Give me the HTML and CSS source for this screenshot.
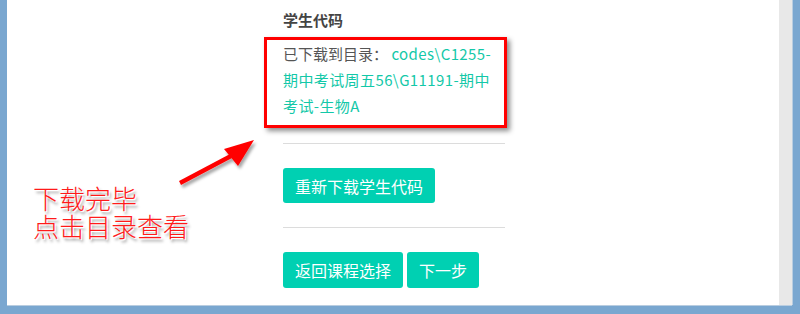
FILE: index.html
```html
<!DOCTYPE html>
<html lang="zh-CN">

<head>
    <meta charset="UTF-8">
    <title>下载学生代码</title>
    <link rel="stylesheet" href="styles.css">
</head>

<body>
    <div class="window">
        <div class="main">
            <div class="section">
                <h3 class="section-title">学生代码</h3>
                <p class="path-text">已下载到目录： <span class="path">codes\C1255-<br>期中考试周五56\G11191-期中<br>考试-生物A</span></p>
                <hr class="divider">
                <button class="btn">重新下载学生代码</button>
                <hr class="divider">
                <div class="btn-row">
                    <button class="btn">返回课程选择</button>
                    <button class="btn">下一步</button>
                </div>
            </div>
        </div>
        <div class="scrollbar"></div>

        <div class="mark-box"></div>
        <svg class="mark-arrow" width="100" height="60" viewBox="0 0 100 60">
            <defs>
                <filter id="shade" x="-20%" y="-20%" width="140%" height="140%">
                    <feDropShadow dx="2" dy="3" stdDeviation="1.5" flood-color="#000" flood-opacity="0.35"/>
                </filter>
            </defs>
            <g filter="url(#shade)" fill="#ff0000">
                <path d="M7 44 L58 17 L60 21 L9 48 Z"/>
                <path d="M82 3 L52 12 L66 29 Z"/>
            </g>
        </svg>
        <div class="mark-note">
            <div class="mark-line">下载完毕</div>
            <div class="mark-line">点击目录查看</div>
        </div>
    </div>
</body>

</html>
```

FILE: styles.css
```css
body {
    margin: 0;
    background-color: #7aa7d0;
    font-family: 'Noto Sans CJK SC', 'Noto Sans', sans-serif;
    height: 314px;
    overflow: hidden;
}

.window {
    position: relative;
    display: flex;
    margin-left: 7px;
    width: 785px;
    height: 305px;
    background-color: #fff;
    box-shadow: 0 1px 0 #b9cde0, 1px 0 0 #b9cde0;
}

.main {
    flex: 1;
    padding-left: 276px;
}

.scrollbar {
    width: 13px;
    background-color: #e8e8e8;
}

.section {
    width: 222px;
}

.section-title {
    margin: 8px 0 0;
    font-size: 15px;
    line-height: 24px;
    font-weight: bold;
    color: #444;
}

.path-text {
    margin: 9px 0 0;
    font-size: 15px;
    line-height: 26px;
    color: #555;
    white-space: nowrap;
}

.path {
    color: #13c8a8;
    letter-spacing: 0.4px;
}

.divider {
    margin: 24px 0;
    border: none;
    border-top: 1px solid #dcdcdc;
}

.btn {
    height: 35px;
    padding: 0 12px;
    border: none;
    border-radius: 3px;
    background-color: #00d0b2;
    color: #fff;
    font-family: inherit;
    font-size: 16px;
    cursor: pointer;
}

.btn-row {
    display: flex;
    gap: 4px;
}

.btn-row .btn {
    height: 36px;
}

.mark-box {
    position: absolute;
    left: 257px;
    top: 37px;
    width: 237px;
    height: 85px;
    border: 3px solid #ff0000;
    box-shadow: 3px 3px 5px rgba(0, 0, 0, 0.45);
}

.mark-arrow {
    position: absolute;
    left: 165px;
    top: 137px;
}

.mark-note {
    position: absolute;
    left: 26px;
    top: 184px;
}

.mark-line {
    height: 28px;
    font-size: 26px;
    line-height: 28px;
    font-weight: 300;
    color: #ff1a1a;
    text-shadow: 0 0 2px #fff, 1px 1px 0 #fff, 2px 3px 3px rgba(0, 0, 0, 0.45);
}
```
